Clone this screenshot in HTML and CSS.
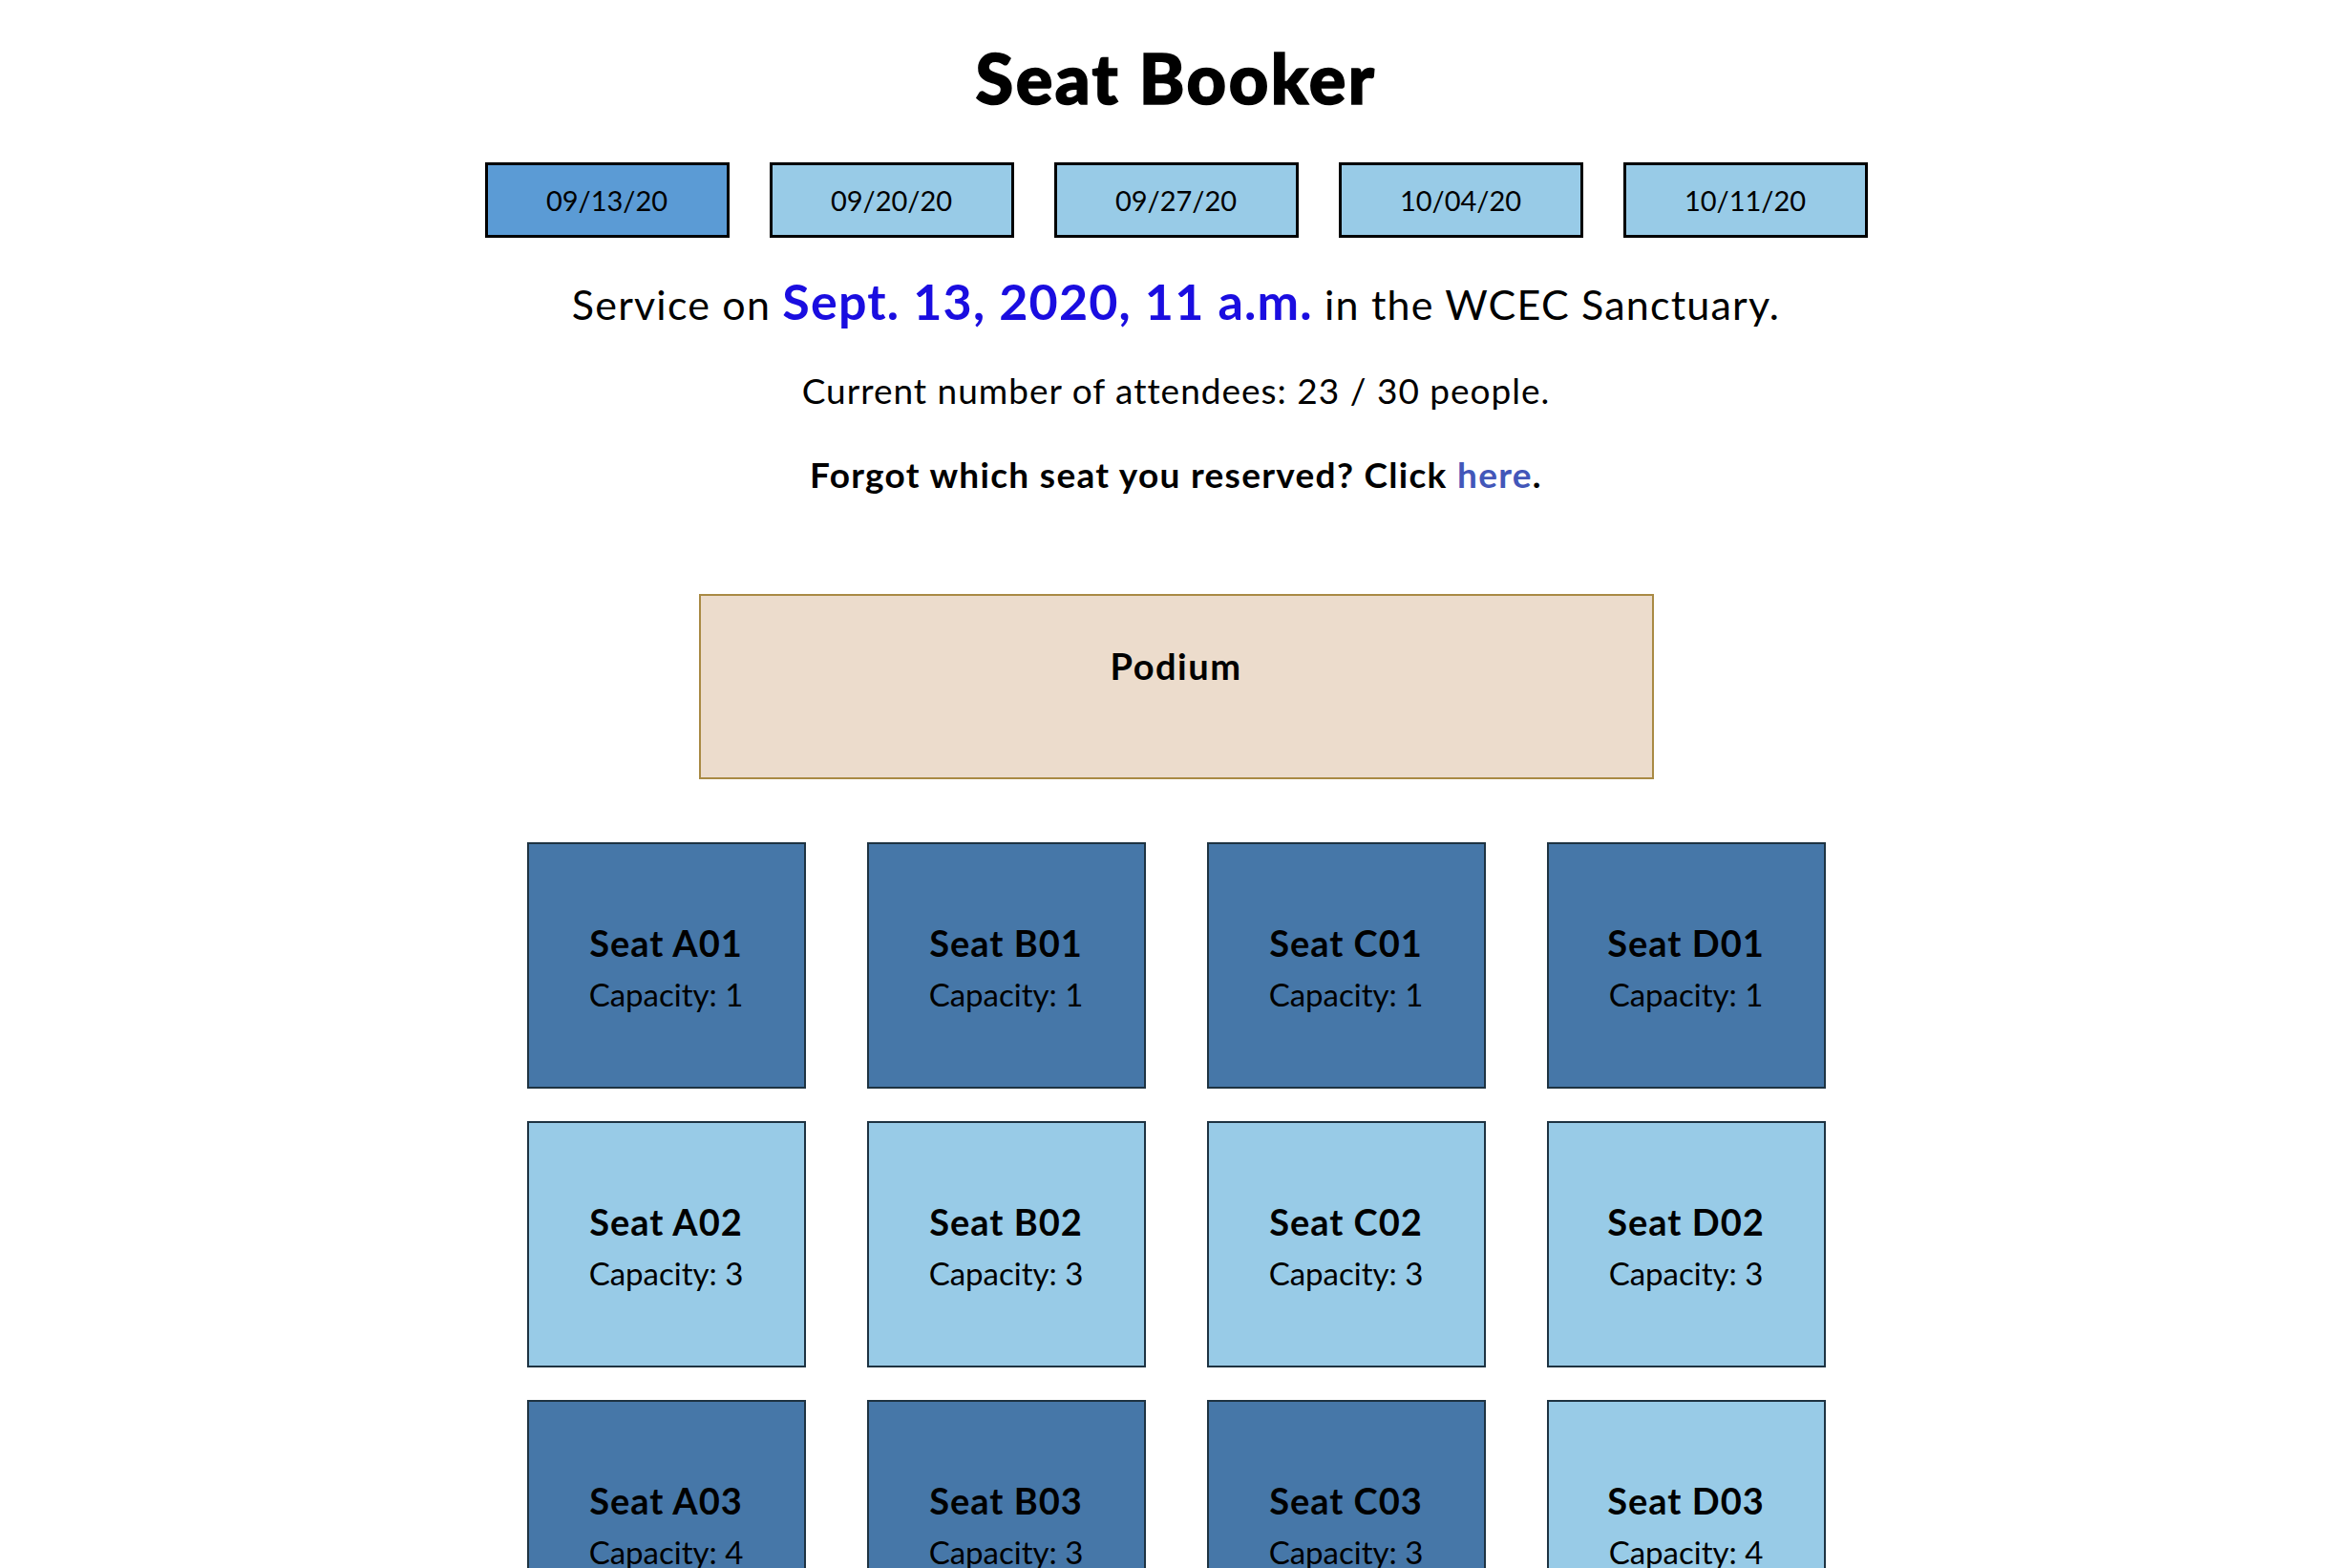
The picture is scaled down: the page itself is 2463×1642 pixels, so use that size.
FILE: index.html
```html
<!DOCTYPE html>
<html lang="en">
<head>
<meta charset="utf-8">
<title>Seat Booker</title>
<link rel="stylesheet" href="styles.css">
</head>
<body>
<main class="page">
  <h1 class="title">Seat Booker</h1>
  <nav class="dates">
    <button class="date date-active">09/13/20</button>
    <button class="date">09/20/20</button>
    <button class="date">09/27/20</button>
    <button class="date">10/04/20</button>
    <button class="date">10/11/20</button>
  </nav>
  <p class="service">Service on <span class="when">Sept. 13, 2020, 11 a.m.</span> in the WCEC Sanctuary.</p>
  <p class="count">Current number of attendees: 23 / 30 people.</p>
  <p class="forgot">Forgot which seat you reserved? Click <a class="link" href="#">here</a>.</p>
  <div class="podium"><span class="podium-label">Podium</span></div>
  <section class="seats">
    <div class="seat seat-taken"><div class="seat-name">Seat A01</div><div class="seat-cap">Capacity: 1</div></div>
    <div class="seat seat-taken"><div class="seat-name">Seat B01</div><div class="seat-cap">Capacity: 1</div></div>
    <div class="seat seat-taken"><div class="seat-name">Seat C01</div><div class="seat-cap">Capacity: 1</div></div>
    <div class="seat seat-taken"><div class="seat-name">Seat D01</div><div class="seat-cap">Capacity: 1</div></div>
    <div class="seat seat-free"><div class="seat-name">Seat A02</div><div class="seat-cap">Capacity: 3</div></div>
    <div class="seat seat-free"><div class="seat-name">Seat B02</div><div class="seat-cap">Capacity: 3</div></div>
    <div class="seat seat-free"><div class="seat-name">Seat C02</div><div class="seat-cap">Capacity: 3</div></div>
    <div class="seat seat-free"><div class="seat-name">Seat D02</div><div class="seat-cap">Capacity: 3</div></div>
    <div class="seat seat-taken"><div class="seat-name">Seat A03</div><div class="seat-cap">Capacity: 4</div></div>
    <div class="seat seat-taken"><div class="seat-name">Seat B03</div><div class="seat-cap">Capacity: 3</div></div>
    <div class="seat seat-taken"><div class="seat-name">Seat C03</div><div class="seat-cap">Capacity: 3</div></div>
    <div class="seat seat-free"><div class="seat-name">Seat D03</div><div class="seat-cap">Capacity: 4</div></div>
  </section>
</main>
</body>
</html>
```

FILE: styles.css
```css
html, body {
  margin: 0;
  padding: 0;
  background: #ffffff;
}

html {
  overflow: hidden;
}

body {
  font-family: "Lato", "Open Sans", sans-serif;
  color: #000000;
}

.page {
  display: flex;
  flex-direction: column;
  align-items: center;
}

.title {
  margin: 41px 0 0;
  font-size: 72px;
  line-height: 80px;
  font-weight: 900;
  letter-spacing: 2.5px;
  -webkit-text-stroke: 1.6px #000000;
}

.dates {
  display: flex;
  gap: 42px;
  margin-top: 49px;
}

.date {
  box-sizing: border-box;
  width: 256px;
  height: 79px;
  border: 3px solid #000000;
  background: #98cbe7;
  font-family: "Lato", sans-serif;
  font-size: 29px;
  color: #000000;
  padding: 0;
  display: flex;
  align-items: center;
  justify-content: center;
}

.date-active {
  background: #5b9bd5;
}

.service {
  margin: 36px 0 0;
  font-size: 43px;
  line-height: 60px;
  letter-spacing: 1.2px;
}

.when {
  color: #1a0de0;
  font-weight: 700;
  font-size: 52px;
}

.count {
  margin: 32px 0 0;
  font-size: 37px;
  line-height: 56px;
  letter-spacing: 1px;
}

.forgot {
  margin: 32px 0 0;
  font-size: 37px;
  line-height: 56px;
  font-weight: 700;
  letter-spacing: 1.3px;
}

.link {
  color: #4357b9;
  text-decoration: none;
}

.podium {
  box-sizing: border-box;
  width: 1000px;
  height: 194px;
  margin-top: 97px;
  border: 2px solid #a98a44;
  background: #ecdccc;
  padding-top: 45px;
  text-align: center;
}

.podium-label {
  font-size: 38px;
  line-height: 56px;
  font-weight: 700;
  letter-spacing: 1.5px;
}

.seats {
  display: grid;
  grid-template-columns: repeat(4, 292px);
  column-gap: 64px;
  row-gap: 34px;
  margin-top: 66px;
}

.seat {
  box-sizing: border-box;
  height: 258px;
  border: 2px solid #1e3342;
  padding-top: 76px;
  text-align: center;
}

.seat-taken {
  background: #4677a8;
}

.seat-free {
  background: #98cbe7;
}

.seat-name {
  font-size: 38px;
  line-height: 54px;
  font-weight: 700;
  letter-spacing: 1px;
}

.seat-cap {
  font-size: 33px;
  line-height: 54px;
}
```
